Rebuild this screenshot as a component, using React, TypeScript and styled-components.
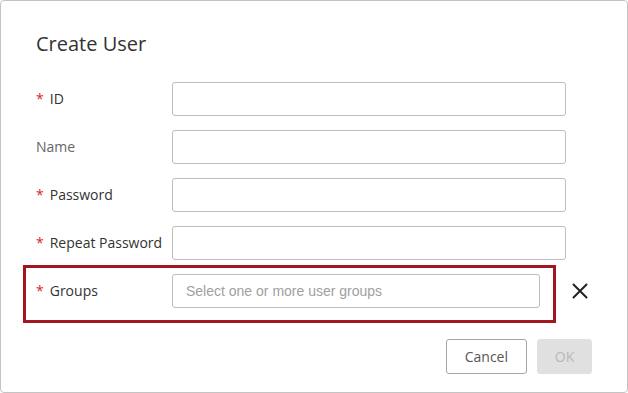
import React from 'react';
import styled, { createGlobalStyle } from 'styled-components';

const GlobalStyle = createGlobalStyle`
  html, body {
    margin: 0;
    padding: 0;
    background: #fff;
  }
  * {
    box-sizing: border-box;
  }
`;

const Dialog = styled.div`
  position: relative;
  width: 628px;
  height: 393px;
  border: 1px solid #c4c4c4;
  border-radius: 4px;
  background: #fff;
  padding: 29px 35px 0 35px;
  font-family: 'Open Sans', 'Noto Sans', sans-serif;
  color: #333;
`;

const Title = styled.h2`
  margin: 0 0 24px 0;
  font-size: 20px;
  font-weight: 400;
  line-height: 28px;
  color: #333;
`;

const Form = styled.div`
  display: flex;
  flex-direction: column;
  gap: 14px;
`;

const Row = styled.div`
  display: flex;
  align-items: center;
  height: 34px;
`;

const Label = styled.label<{ $muted?: boolean }>`
  width: 136px;
  flex-shrink: 0;
  font-size: 14px;
  line-height: 18px;
  margin-top: -1px;
  color: ${p => (p.$muted ? '#666' : '#333')};
  white-space: nowrap;
`;

const Star = styled.span`
  color: #d9262c;
  margin-right: 6px;
`;

const Input = styled.input<{ $width: number }>`
  width: ${p => p.$width}px;
  height: 34px;
  border: 1px solid #bdbdbd;
  border-radius: 3px;
  padding: 0 13px;
  font-family: 'Liberation Sans', Arial, sans-serif;
  font-size: 14px;
  color: #333;
  outline: none;
  &::placeholder {
    color: #a0a0a0;
  }
`;

const Close = styled.button`
  margin-left: 30px;
  width: 20px;
  height: 20px;
  padding: 0;
  border: none;
  background: none;
  display: flex;
  align-items: center;
  justify-content: center;
  cursor: pointer;
`;

const Highlight = styled.div`
  position: absolute;
  left: 22px;
  top: 264px;
  width: 533px;
  height: 58px;
  border: 3px solid #a3161f;
  pointer-events: none;
`;

const Footer = styled.div`
  display: flex;
  justify-content: flex-end;
  gap: 10px;
  margin-top: 31px;
`;

const Button = styled.button<{ $disabled?: boolean }>`
  height: 35px;
  min-width: 55px;
  padding: 0 ${p => (p.$disabled ? 16 : 18)}px;
  border-radius: 3px;
  font-family: 'Open Sans', 'Noto Sans', sans-serif;
  font-size: 14px;
  border: 1px solid ${p => (p.$disabled ? '#e0e0e0' : '#a6a6a6')};
  background: ${p => (p.$disabled ? '#e0e0e0' : '#fff')};
  color: ${p => (p.$disabled ? '#b8b8b8' : '#555')};
`;

const fields = [
  { label: 'ID', required: true },
  { label: 'Name', required: false },
  { label: 'Password', required: true },
  { label: 'Repeat Password', required: true },
];

const App = () => (
  <>
    <GlobalStyle />
    <Dialog>
      <Title>Create User</Title>
      <Form>
        {fields.map(f => (
          <Row key={f.label}>
            <Label $muted={!f.required}>
              {f.required && <Star>*</Star>}
              {f.label}
            </Label>
            <Input $width={394} />
          </Row>
        ))}
        <Row>
          <Label>
            <Star>*</Star>
            Groups
          </Label>
          <Input $width={368} placeholder="Select one or more user groups" />
          <Close aria-label="Remove">
            <svg width="16" height="16" viewBox="0 0 16 16">
              <path d="M1.5 1.5 L14.5 14.5 M14.5 1.5 L1.5 14.5" stroke="#222" strokeWidth="2" strokeLinecap="round" />
            </svg>
          </Close>
        </Row>
      </Form>
      <Footer>
        <Button>Cancel</Button>
        <Button $disabled>OK</Button>
      </Footer>
      <Highlight />
    </Dialog>
  </>
);

export default App;
